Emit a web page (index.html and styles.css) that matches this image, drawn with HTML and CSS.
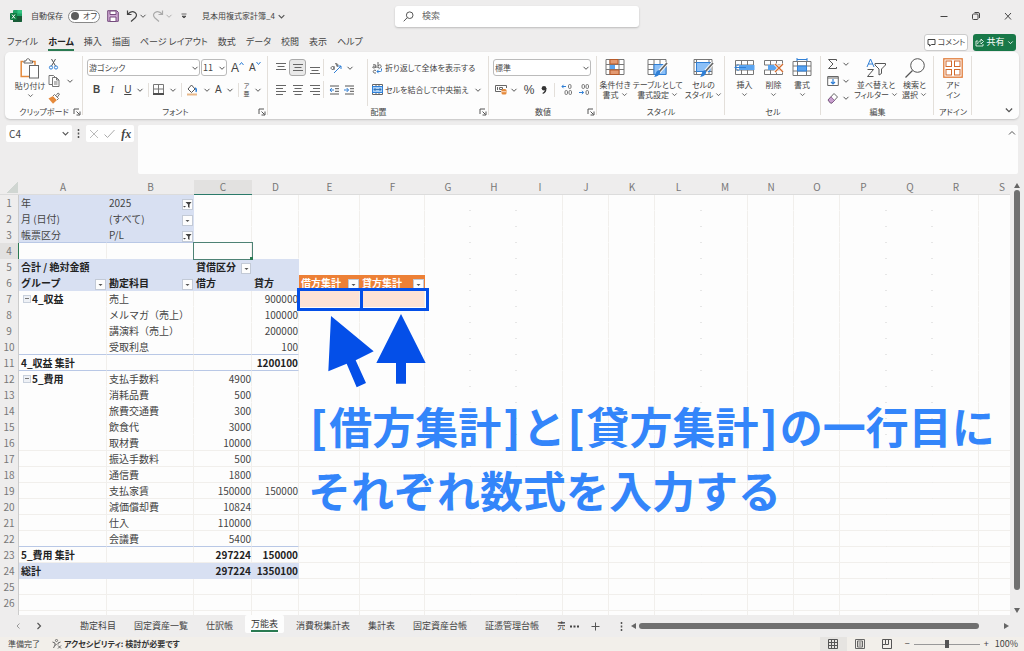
FILE: index.html
```html
<!DOCTYPE html>
<html lang="ja">
<head>
<meta charset="utf-8">
<title>見本用複式家計簿_4</title>
<link rel="stylesheet" href="styles.css">
</head>
<body>
<svg class="defs" aria-hidden="true">
  <symbol id="chev" viewBox="0 0 8 8"><path d="M1.5 2.8 4 5.3 6.5 2.8" fill="none" stroke="#555" stroke-width="1"/></symbol>
  <symbol id="launch" viewBox="0 0 8 8"><path d="M1 6V1h5M3.5 3.500 6.500 6.500M7 3.500V7H3.500" fill="none" stroke="#555" stroke-width="1"/></symbol>
  <symbol id="al" viewBox="0 0 12 12"><path d="M1 1.500h10M1 4.500h7M1 7.500h10M1 10.500h7" stroke="#666"/></symbol>
  <symbol id="ac" viewBox="0 0 12 12"><path d="M1 1.500h10M2.500 4.500h7M1 7.500h10M2.500 10.500h7" stroke="#666"/></symbol>
  <symbol id="ar" viewBox="0 0 12 12"><path d="M1 1.500h10M4 4.500h7M1 7.500h10M4 10.500h7" stroke="#666"/></symbol>
</svg>
<div class="app">
  <header class="titlebar">
    <div class="quick">
      <svg class="xl" width="12" height="12" viewBox="0 0 12 12"><rect x="3" y="0" width="9" height="12" rx="1" fill="#21a366"/><path d="M3 6h9v5a1 1 0 0 1-1 1H3z" fill="#185c37"/><path d="M7.500 0H11a1 1 0 0 1 1 1v2.500H7.500z" fill="#33c481"/><rect y="3" width="7" height="7" rx="1" fill="#107c41"/><path d="m2 4.500 3 4M5 4.500l-3 4" stroke="#fff"/></svg>
      <span class="autosave">自動保存</span>
      <button class="toggle" aria-label="自動保存 オフ"><i></i>オフ</button>
      <button class="q-save" aria-label="保存"><svg width="12" height="12" viewBox="0 0 12 12"><path d="M.7.7h9L11.300 2.300v9H.700z" fill="#cfa9d4" stroke="#744a7c"/><path d="M3 1h6v3.500H3zM3 7h6v4.500H3z" fill="#fff" stroke="#744a7c"/></svg></button>
      <button class="q-undo" aria-label="元に戻す"><svg width="12" height="12" viewBox="0 0 12 12"><path d="M1.500.500v4h4M1.500 4.500C4 1.500 7 1 9 2.500s2 3.500 0 5.500l-4 3.500" fill="none" stroke="#444" stroke-width="1.200"/></svg><svg width="8" height="8"><use href="#chev"/></svg></button>
      <button class="q-redo" aria-label="やり直し"><svg width="12" height="12" viewBox="0 0 12 12"><path d="M10.500.500v4h-4M10.500 4.500C8 1.500 5 1 3 2.500S1 6 3 8l4 3.500" fill="none" stroke="#aaa" stroke-width="1.200"/></svg><svg width="8" height="8" opacity=".4"><use href="#chev"/></svg></button>
      <button class="q-more" aria-label="カスタマイズ"><svg width="8" height="8" viewBox="0 0 8 8"><path d="M1.500 2h5M2 4.200 4 6l2-1.800z" fill="#444" stroke="#444" stroke-width=".8"/></svg></button>
      <button class="doc">見本用複式家計簿_4<svg width="9" height="9"><use href="#chev"/></svg></button>
    </div>
    <label class="search"><svg width="11" height="11" viewBox="0 0 11 11"><circle cx="6.700" cy="4.200" r="3.300" fill="none" stroke="#555"/><path d="M4.300 6.600.700 10.300" stroke="#555"/></svg><input type="search" placeholder="検索" aria-label="検索"></label>
    <div class="window">
      <button aria-label="最小化"><svg width="10" height="10" viewBox="0 0 10 10"><path d="M1.500 5.500h7" stroke="#444"/></svg></button>
      <button aria-label="元に戻す (縮小)"><svg width="10" height="10" viewBox="0 0 10 10"><rect x="1.500" y="3" width="5.500" height="5.500" rx="1" fill="none" stroke="#444"/><path d="M3.500 1.500H7A1.500 1.500 0 0 1 8.500 3v4" fill="none" stroke="#444"/></svg></button>
      <button aria-label="閉じる"><svg width="10" height="10" viewBox="0 0 10 10"><path d="m2 2 6 6.500M8 2 2 8.500" stroke="#444"/></svg></button>
    </div>
  </header>

  <nav class="tabs">
    <a href="#">ファイル</a><a href="#" class="on">ホーム</a><a href="#">挿入</a><a href="#">描画</a><a href="#">ページ レイアウト</a><a href="#">数式</a><a href="#">データ</a><a href="#">校閲</a><a href="#">表示</a><a href="#">ヘルプ</a>
    <button class="comment"><svg width="9" height="9" viewBox="0 0 9 9"><path d="M1 1.500h7v5H4.500L2.500 8V6.500H1z" fill="none" stroke="#444"/></svg>コメント</button>
    <button class="share"><svg width="9" height="9" viewBox="0 0 9 9"><path d="M3 3H1v5h7V6M2.500 6C3 4 4 3 6 3V1l2.500 2.500L6 6V4.500" fill="none" stroke="#fff" stroke-width=".8"/></svg>共有<svg width="7" height="7" viewBox="0 0 8 8"><path d="M1.500 2.800 4 5.300 6.500 2.800" fill="none" stroke="#fff"/></svg></button>
  </nav>

  <section class="ribbon">
    <div class="group g-clip">
      <div class="body">
        <button class="big paste"><svg width="20" height="21" viewBox="0 0 20 21"><path d="M3.500 3.500H1.200v15h8M12 3.500h3V7" fill="none" stroke="#e58a3c" stroke-width="1.500"/><path d="M4 5V3h2c0-3 4-3 4 0h2.500v2z" fill="#fff" stroke="#666"/><rect x="9.500" y="7.500" width="9" height="12.500" fill="#fff" stroke="#666"/></svg><span>貼り付け</span><svg width="7" height="7"><use href="#chev"/></svg></button>
        <div class="stack">
          <button aria-label="切り取り"><svg width="11" height="12" viewBox="0 0 11 12"><path d="m3.500 1 4 7M7.500 1l-4 7" stroke="#555"/><circle cx="3" cy="9.500" r="1.600" fill="none" stroke="#2f7fd6"/><circle cx="8" cy="9.500" r="1.600" fill="none" stroke="#2f7fd6"/></svg></button>
          <button aria-label="コピー"><svg width="12" height="12" viewBox="0 0 12 12"><path d="M4 9.500H1v-9h4.500L7 2M4.500 2.500h4L11 5v6.500H4.500zM8.500 2.500V5H11M6 7h3.500M6 9h3.500" fill="none" stroke="#666" stroke-width=".9"/></svg><svg width="8" height="8"><use href="#chev"/></svg></button>
          <button aria-label="書式のコピー"><svg width="12" height="12" viewBox="0 0 12 12"><path d="M.500 6.500 5 4l4 4-4 3.800z" fill="#e58a3c"/><path d="m5 4 1.500-1.500 4 4L9 8M8 3.500l2-2.500 1.500 1L9.500 5" fill="#fff" stroke="#666" stroke-width=".9"/></svg></button>
        </div>
      </div>
      <footer><span>クリップボード</span><svg width="8" height="8"><use href="#launch"/></svg></footer>
    </div>

    <div class="group g-font">
      <div class="body rows">
        <div class="row">
          <span class="sel w-font"><select aria-label="フォント"><option>游ゴシック</option></select><svg width="8" height="8"><use href="#chev"/></svg></span>
          <span class="sel w-size"><select aria-label="フォント サイズ"><option>11</option></select><svg width="8" height="8"><use href="#chev"/></svg></span>
          <button class="grow" aria-label="拡大">A<svg width="5" height="5" viewBox="0 0 5 5"><path d="m.500 4 2-2.500 2 2.500" fill="none" stroke="#2f7fd6"/></svg></button>
          <button class="grow small" aria-label="縮小">A<svg width="5" height="5" viewBox="0 0 5 5"><path d="m.500 1 2 2.500L4.500 1" fill="none" stroke="#2f7fd6"/></svg></button>
        </div>
        <div class="row fmt">
          <button class="b">B</button><button class="i">I</button><button class="u">U</button><svg width="8" height="8"><use href="#chev"/></svg><hr>
          <button aria-label="罫線"><svg width="11" height="11" viewBox="0 0 11 11"><path d="M.500 9V.500h10V9M.500 5h10M5.500.500V9" fill="none" stroke="#777"/><path d="M0 10h11" stroke="#222" stroke-width="1.600"/></svg></button><svg width="8" height="8"><use href="#chev"/></svg><hr>
          <button aria-label="塗りつぶし"><svg width="12" height="12" viewBox="0 0 12 12"><path d="M5.500 1 2 5l3.500 3.500L9 5z" fill="#fff" stroke="#555"/><path d="M9 4c2 1 1.500 2.500 1 4" fill="none" stroke="#2f7fd6" stroke-width="1.400"/><path d="M1 10.500h10" stroke="#e8b98a" stroke-width="2"/></svg></button><svg width="8" height="8"><use href="#chev"/></svg>
          <button class="a">A</button><svg width="8" height="8"><use href="#chev"/></svg><hr>
          <button class="ruby" aria-label="ふりがな"><span>ア</span><span>亜</span></button><svg width="8" height="8"><use href="#chev"/></svg>
        </div>
      </div>
      <footer><span>フォント</span><svg width="8" height="8"><use href="#launch"/></svg></footer>
    </div>

    <div class="group g-align">
      <div class="body cols">
        <div class="aligns">
          <button aria-label="上揃え"><svg width="12" height="12" viewBox="0 0 12 12"><path d="M1 1.500h10M2.500 4.500h7M1 7.500h10" stroke="#666"/></svg></button>
          <button class="on" aria-label="上下中央揃え"><svg width="12" height="12" viewBox="0 0 12 12"><path d="M1 2.500h10M2.500 5.500h7M1 8.500h10" stroke="#666"/></svg></button>
          <button aria-label="下揃え"><svg width="12" height="12" viewBox="0 0 12 12"><path d="M1 5.500h10M2.500 8.500h7M1 11.500h10" stroke="#666"/></svg></button>
          <button class="orient" aria-label="方向"><svg width="12" height="12" viewBox="0 0 12 12"><path d="M2.500 4.500a1.500 1.500 0 1 0 .1 0M4 4v4M5.500 1l2 4M7 4c2-1 0-3-1-2" fill="none" stroke="#555" stroke-width=".9"/><path d="m4 11 7-7M11 7V4H8" fill="none" stroke="#2f7fd6"/></svg><svg width="8" height="8"><use href="#chev"/></svg></button>
          <button aria-label="左揃え"><svg width="12" height="12"><use href="#al"/></svg></button>
          <button aria-label="中央揃え"><svg width="12" height="12"><use href="#ac"/></svg></button>
          <button aria-label="右揃え"><svg width="12" height="12"><use href="#ar"/></svg></button>
          <button class="orient" aria-label="インデント"><svg width="11" height="10" viewBox="0 0 11 10"><path d="M1 1h9M6 3.700h4M6 6.300h4M1 9h9" stroke="#555"/><path d="M5 5H1m1.800-2L1 5l1.800 2" fill="none" stroke="#2f7fd6"/></svg><svg width="11" height="10" viewBox="0 0 11 10"><path d="M1 1h9M6 3.700h4M6 6.300h4M1 9h9" stroke="#555"/><path d="M0 5h4.500M2.700 3l1.800 2-1.800 2" fill="none" stroke="#2f7fd6"/></svg></button>
        </div>
        <div class="wraps">
          <button><svg width="11" height="12" viewBox="0 0 11 12"><path d="M1 3c2-1 3 0 3 1v2M4 4C0 4 0 6 2 6l2-1M6 0v6M6 4c1-2 4-1 3 1S6 6 6 5M4 8.500C1 7 0 11 3 11h1" fill="none" stroke="#555" stroke-width=".9"/><path d="M9.500 6.500v2q0 1-1 1H5m1.500-1.700L5 9.500l1.500 1.700" fill="none" stroke="#2f7fd6"/></svg>折り返して全体を表示する</button>
          <button><svg width="11" height="11" viewBox="0 0 11 11"><path d="M.500.500h10v10H.500zM4 .500V3M7 .500V3M4 8v2.500M7 8v2.500" fill="#fff" stroke="#666"/><rect x=".5" y="2.500" width="10" height="6" fill="#a9d0f7" stroke="#2f7fd6"/><path d="M2 5.500h7M3.500 4 2 5.500 3.500 7M7.500 4 9 5.500 7.500 7" fill="none" stroke="#1c5fa8" stroke-width=".8"/></svg>セルを結合して中央揃え<svg class="end" width="8" height="8"><use href="#chev"/></svg></button>
        </div>
      </div>
      <footer><span>配置</span><svg width="8" height="8"><use href="#launch"/></svg></footer>
    </div>

    <div class="group g-num">
      <div class="body rows">
        <div class="row"><span class="sel w-num"><select aria-label="表示形式"><option>標準</option></select><svg width="8" height="8"><use href="#chev"/></svg></span></div>
        <div class="row nums">
          <button class="cur" aria-label="通貨"><svg width="12" height="11" viewBox="0 0 12 11"><path d="M6 7.500H.500v-6h11V4" fill="none" stroke="#666"/><path d="M2.500 3v3M4.500 3.500h3v2h-3z" fill="none" stroke="#666"/><rect x="6.500" y="5" width="5" height="5.500" rx="1.500" fill="#e58a3c"/><path d="M7 7.700h4" stroke="#fff" stroke-width=".7"/></svg><svg width="8" height="8"><use href="#chev"/></svg></button>
          <button class="pct">%</button>
          <button aria-label="桁区切り"><svg width="8" height="10" viewBox="0 0 8 10"><circle cx="4" cy="3.300" r="2.300" fill="#333"/><path d="M5.700 3c.5 3-1 4.500-3 5.500" fill="none" stroke="#333" stroke-width="1.300"/></svg></button><hr>
          <button class="dec" aria-label="小数点以下の桁数を増やす"><svg width="11" height="11" viewBox="0 0 11 11"><path d="M5 2.500H1m1.500-1.700L1 2.500l1.500 1.700" fill="none" stroke="#2f7fd6"/><g fill="none" stroke="#666" stroke-width=".9"><rect x="7.500" y=".5" width="2.500" height="4" rx="1.200"/><rect x="4" y="6.500" width="2.500" height="4" rx="1.200"/><rect x="8" y="6.500" width="2.500" height="4" rx="1.200"/></g></svg></button>
          <button class="dec" aria-label="小数点以下の桁数を減らす"><svg width="11" height="11" viewBox="0 0 11 11"><path d="M1 8.500h4.500M4 6.800l1.500 1.700L4 10.200" fill="none" stroke="#2f7fd6"/><g fill="none" stroke="#666" stroke-width=".9"><rect x="4" y=".5" width="2.500" height="4" rx="1.200"/><rect x="8" y=".5" width="2.500" height="4" rx="1.200"/><rect x="8" y="6.500" width="2.500" height="4" rx="1.200"/></g></svg></button>
        </div>
      </div>
      <footer><span>数値</span><svg width="8" height="8"><use href="#launch"/></svg></footer>
    </div>

    <div class="group g-style">
      <div class="body bigs">
        <button class="big"><svg width="20" height="20" viewBox="0 0 20 20"><path d="M1 1.500h18v15H1zM1 6.500h18M1 11.500h18M5 1.500v15M14 1.500v15" fill="#fff" stroke="#777"/><path d="M5 1.500h8v4.500H5zM5 12h9v4.500H5z" fill="#e39a72" stroke="#b85b2a"/><path d="M5 7h5v4H5z" fill="#5aa4f0"/></svg><span>条件付き<br>書式<svg width="7" height="7"><use href="#chev"/></svg></span></button>
        <button class="big"><svg width="21" height="20" viewBox="0 0 21 20"><path d="M1 1.500h18v15H1zM1 6.500h18M1 11.500h18M7 1.500v15M13 1.500v15" fill="#fff" stroke="#777"/><path d="M7 6.500h12v10H7z" fill="#8cc0f7" stroke="#2f7fd6"/><path d="m20 5-8 9" stroke="#fff" stroke-width="3.500"/><path d="m20 5-8 9" stroke="#666" stroke-width="1.800"/><path d="M12 12c2 1 2 6-5 7 2-2 1-6 5-7z" fill="#2f7fd6"/></svg><span>テーブルとして<br>書式設定<svg width="7" height="7"><use href="#chev"/></svg></span></button>
        <button class="big"><svg width="21" height="20" viewBox="0 0 21 20"><path d="M1 1.500h18v15H1zM1 4.500h18M1 13.500h18M3.500 1.500v15M16 1.500v15" fill="#fff" stroke="#777"/><path d="M3.500 4.500H17v9H3.500z" fill="#8cc0f7" stroke="#2f7fd6"/><path d="m20 5-8 9" stroke="#fff" stroke-width="3.500"/><path d="m20 5-8 9" stroke="#666" stroke-width="1.800"/><path d="M12 12c2 1 2 6-5 7 2-2 1-6 5-7z" fill="#2f7fd6"/></svg><span>セルの<br>スタイル<svg width="7" height="7"><use href="#chev"/></svg></span></button>
      </div>
      <footer><span>スタイル</span></footer>
    </div>

    <div class="group g-cell">
      <div class="body bigs">
        <button class="big"><svg width="21" height="20" viewBox="0 0 21 20"><path d="M1.500 2.500h18v14h-18zM7.500 2.500v14M13.500 2.500v14M1.500 7h18M1.500 12h18" fill="#fff" stroke="#777"/><path d="M5 7h15.500v5H5z" fill="#5aa4f0"/><path d="M12 9.500H1M4.500 6 1 9.500 4.500 13" fill="none" stroke="#2f7fd6"/></svg><span>挿入</span><svg width="7" height="7"><use href="#chev"/></svg></button>
        <button class="big"><svg width="21" height="20" viewBox="0 0 21 20"><path d="M1.500 2.500h18v4.500h-18zM1.500 12h18v4.500h-18zM7.500 2.500V7M13.500 2.500V7M7.500 12v4.500M13.500 12v4.500" fill="#fff" stroke="#777"/><path d="M5 7h7l3 2.500-3 2.500H5z" fill="#5aa4f0"/><path d="m12 6 8 8M20 6l-8 8" stroke="#fff" stroke-width="3"/><path d="m12 6 8 8M20 6l-8 8" stroke="#d2692c" stroke-width="1.300"/></svg><span>削除</span><svg width="7" height="7"><use href="#chev"/></svg></button>
        <button class="big"><svg width="20" height="20" viewBox="0 0 20 20"><path d="M1 3.500h18v14H1zM5.500 3.500v14M14.500 3.500v14M1 8h18M1 13h18" fill="#fff" stroke="#777"/><path d="M5.500 8h9v5h-9z" fill="#5aa4f0" stroke="#2f7fd6"/><path d="M5 0v3M15 0v3M5 1.500h10" stroke="#2f7fd6"/></svg><span>書式</span><svg width="7" height="7"><use href="#chev"/></svg></button>
      </div>
      <footer><span>セル</span></footer>
    </div>

    <div class="group g-edit">
      <div class="body">
        <div class="stack">
          <button aria-label="オート SUM"><svg width="12" height="12" viewBox="0 0 12 12"><path d="M9.500 3V1.500h-8L6 6l-4.500 4.500h8V9" fill="none" stroke="#555"/></svg><svg width="8" height="8"><use href="#chev"/></svg></button>
          <button aria-label="フィル"><svg width="12" height="12" viewBox="0 0 12 12"><path d="M.700 1.500h10.600v9H.700zM.700 3h10.600" fill="#fff" stroke="#666"/><path d="M6 4v5M4 7l2 2 2-2" fill="none" stroke="#2f7fd6" stroke-width="1.200"/></svg><svg width="8" height="8"><use href="#chev"/></svg></button>
          <button aria-label="クリア"><svg width="12" height="12" viewBox="0 0 12 12"><path d="m1 8 6-6.500L10.500 5l-5.500 6H3.500z" fill="#fff" stroke="#666"/><path d="m1 8 3-3.200 3.500 3.700L5 11H3.500z" fill="#c9a0cf" stroke="#744a7c" stroke-width=".7"/></svg><svg width="8" height="8"><use href="#chev"/></svg></button>
        </div>
        <button class="big"><svg width="20" height="20" viewBox="0 0 20 20"><path d="m1 9 3.500-8L8 9M2.300 6h4.400" fill="none" stroke="#2f7fd6"/><path d="M1.500 11.500h6l-6 7h6" fill="none" stroke="#555"/><path d="M9 5.500h10.500v1.500L15.500 11v4.500L13 17v-6L9 7z" fill="#fff" stroke="#555"/></svg><span>並べ替えと<br>フィルター<svg width="7" height="7"><use href="#chev"/></svg></span></button>
        <button class="big"><svg width="20" height="20" viewBox="0 0 20 20"><circle cx="12.500" cy="7.500" r="6.800" fill="none" stroke="#555"/><path d="M7.500 12.500.500 19.500" stroke="#555" stroke-width="1.200"/></svg><span>検索と<br>選択<svg width="7" height="7"><use href="#chev"/></svg></span></button>
      </div>
      <footer><span>編集</span></footer>
    </div>

    <div class="group g-add">
      <div class="body bigs">
        <button class="big"><svg width="20" height="20" viewBox="0 0 20 20"><rect x=".8" y=".8" width="18.400" height="18.400" fill="#fff" stroke="#e07b39" stroke-width="1.300"/><g fill="#fff" stroke="#d2692c"><rect x="3" y="3" width="5.500" height="5.500"/><rect x="11.500" y="3" width="5.500" height="5.500"/><rect x="3" y="11.500" width="5.500" height="5.500"/><rect x="11.500" y="11.500" width="5.500" height="5.500"/></g></svg><span>アド<br>イン</span></button>
      </div>
      <footer><span>アドイン</span></footer>
    </div>
    <button class="collapse" aria-label="リボンを折りたたむ"><svg width="10" height="10"><use href="#chev"/></svg></button>
  </section>

  <section class="formula">
    <label class="namebox"><input value="C4" aria-label="名前ボックス"><svg width="9" height="9"><use href="#chev"/></svg></label>
    <svg class="dots" width="3" height="9" viewBox="0 0 3 9"><path d="M1.500 0v2M1.500 3.500v2M1.500 7v2" stroke="#555" stroke-width="1.500"/></svg>
    <div class="fx">
      <button aria-label="キャンセル"><svg width="10" height="10" viewBox="0 0 10 10"><path d="m1 1 8 8M9 1 1 9" stroke="#bbb"/></svg></button>
      <button aria-label="入力"><svg width="11" height="10" viewBox="0 0 11 10"><path d="m.500 5.500 3 3L10.500 1" fill="none" stroke="#aaa"/></svg></button>
      <button class="fxb">fx</button>
    </div>
    <div class="fbar"><textarea aria-label="数式バー"></textarea><svg width="8" height="8" viewBox="0 0 8 8"><path d="M1 5.500 4 2.500l3 3" fill="none" stroke="#555"/></svg></div>
  </section>

  <main class="work">
    <div class="sheet">
      <table id="grid"></table>
      <div class="mark mark-e"></div>
      <div class="mark mark-f"></div>
      <svg class="arrows" width="240" height="130" viewBox="0 0 720 390" aria-hidden="true"><g fill="#044fe8"><path d="m123 153 128 106-54 27 31 68-28 13-30-71-55 23z"/><path d="m333 147 74 147h-59v62h-30v-62h-59z"/></g></svg>
      <p class="note"><b>[</b>借方集計<b>]</b>と<b>[</b>貸方集計<b>]</b>の一行目に<br>それぞれ数式を入力する</p>
    </div>
    <div class="vscroll"><svg width="6" height="5" viewBox="0 0 6 5"><path d="M3 0 6 5H0z" fill="#666"/></svg><i></i><svg width="6" height="5" viewBox="0 0 6 5"><path d="M3 5 6 0H0z" fill="#666"/></svg></div>
  </main>

  <nav class="sheets">
    <div class="arrowsnav"><button aria-label="前へ"><svg width="6" height="8" viewBox="0 0 6 8"><path d="M4.500 1.500 2 4l2.500 2.500" fill="none" stroke="#999"/></svg></button><button aria-label="次へ"><svg width="6" height="8" viewBox="0 0 6 8"><path d="M1.500 1 4.500 4l-3 3" fill="none" stroke="#555" stroke-width="1.200"/></svg></button></div>
    <a href="#">勘定科目</a><a href="#">固定資産一覧</a><a href="#">仕訳帳</a><a href="#" class="on"><span>万能表</span></a><a href="#">消費税集計表</a><a href="#">集計表</a><a href="#">固定資産台帳</a><a href="#">証憑管理台帳</a><a href="#" class="cut">売</a>
    <button class="more" aria-label="その他のシート"><svg width="9" height="3" viewBox="0 0 9 3"><path d="M0 1.500h2M3.500 1.500h2M7 1.500h2" stroke="#444" stroke-width="1.800"/></svg></button>
    <button class="plus" aria-label="新しいシート"><svg width="9" height="9" viewBox="0 0 9 9"><path d="M4.500.500v8M.500 4.500h8" stroke="#555"/></svg></button>
    <svg class="vdots" width="3" height="9" viewBox="0 0 3 9"><path d="M1.500 0v2M1.500 3.500v2M1.500 7v2" stroke="#555" stroke-width="1.500"/></svg>
    <div class="hscroll"><svg width="5" height="6" viewBox="0 0 5 6"><path d="M0 3 5 0v6z" fill="#666"/></svg><i></i><svg width="5" height="6" viewBox="0 0 5 6"><path d="M5 3 0 0v6z" fill="#666"/></svg></div>
  </nav>

  <footer class="status">
    <span>準備完了</span>
    <button class="acc"><svg width="10" height="10" viewBox="0 0 10 10"><circle cx="4.500" cy="1.500" r="1.100" fill="none" stroke="#555" stroke-width=".8"/><path d="m.500 3 2.500 1v2L1.500 9M8.500 3 6 4v1.500M3.500 6.500 4.500 5M6 6.500l3 3M9 6.500l-3 3" fill="none" stroke="#555" stroke-width=".9"/></svg>アクセシビリティ: 検討が必要です</button>
    <div class="views">
      <button class="on" aria-label="標準"><svg width="10" height="10" viewBox="0 0 10 10"><path d="M.500.500h9v9h-9zM3.500.500v9M6.500.500v9M.500 3.500h9M.500 6.500h9" fill="none" stroke="#555"/></svg></button>
      <button aria-label="ページ レイアウト"><svg width="10" height="10" viewBox="0 0 10 10"><path d="M.500.500h9v9h-9zM2.500 2h5v6h-5zM3.500 4h3M3.500 6h3" fill="none" stroke="#666"/></svg></button>
      <button aria-label="改ページ プレビュー"><svg width="10" height="10" viewBox="0 0 10 10"><path d="M.500.500h9v9h-9zM3.500.500v5h-3M3.500 5.500h3v-5" fill="none" stroke="#555"/></svg></button>
    </div>
    <div class="zoom"><button aria-label="縮小">−</button><input type="range" min="0" max="100" value="50" aria-label="ズーム"><button aria-label="拡大">+</button><span>100%</span></div>
  </footer>
</div>
<script src="sheet.js"></script>
</body>
</html>
```

FILE: styles.css
```css
* { box-sizing: border-box; }
body {
  margin: 0;
  font: 9px/12px "Noto Sans CJK JP", "Noto Sans", sans-serif;
  font-feature-settings: "palt";
  color: #444;
  background: #eeeded;
}
button, input, select, textarea {
  font: inherit;
  font-feature-settings: inherit;
  color: inherit;
  margin: 0;
  padding: 0;
  border: 0;
  background: none;
  outline: 0;
}
button { display: flex; align-items: center; justify-content: center; white-space: nowrap; }
a { color: inherit; text-decoration: none; white-space: nowrap; }
svg { flex: none; }
hr { width: 1px; height: 14px; margin: 0; border: 0; background: #e3dfda; }
.defs { position: absolute; width: 0; height: 0; }
.app { display: flex; flex-direction: column; height: 100vh; overflow: hidden; }

/* title bar */
.titlebar { display: grid; grid-template-columns: 395px minmax(160px, 244px) 1fr; align-items: center; height: 32px; flex: none; }
.quick { display: flex; align-items: center; font-size: 8px; padding-left: 10px; }
.autosave { margin: 0 5px 0 9px; }
.toggle { gap: 4px; width: 32px; height: 13px; border: 1px solid #888; border-radius: 7px; background: #fff; margin-right: 7px; }
.toggle i { width: 8px; height: 8px; border-radius: 50%; background: #5c5c5c; }
.q-undo { margin-left: 7px; gap: 1px; }
.q-redo { margin-left: 5px; gap: 1px; }
.q-more { margin: 0 14px 0 7px; }
.doc { gap: 2px; }
.search { display: flex; align-items: center; gap: 8px; height: 21px; padding: 0 8px; background: #fff; border-radius: 3px; box-shadow: 0 1px 2px #bbb; }
.search input { flex: 1; min-width: 0; }
.search input::placeholder { color: #666; opacity: 1; }
.window { display: flex; justify-content: flex-end; gap: 22px; padding-right: 11px; }

/* ribbon tabs */
.tabs { display: flex; align-items: center; gap: 10px; height: 20px; flex: none; padding: 0 8px 0 7px; }
.tabs a { padding-bottom: 1px; border-bottom: 2px solid transparent; line-height: 13px; margin-top: 2px; }
.tabs .on { font-weight: 700; border-color: #2a7a52; color: #222; }
.comment, .share { height: 17px; gap: 2px; border-radius: 3px; font-size: 8px; }
.comment { margin-left: auto; width: 44px; background: #fff; border: 1px solid #ccc; }
.share { margin-left: -5px; width: 43px; background: #187848; color: #fff; font-size: 9px; }

/* ribbon */
.ribbon { display: flex; flex: none; height: 67px; margin: 0 5px; background: #fdfdfd; border-radius: 5px; box-shadow: 0 1px 2px #c4c4c4; font-size: 8px; }
.group { display: flex; flex-direction: column; padding-top: 6px; position: relative; }
.group::after { content: ""; position: absolute; right: 0; top: 4px; bottom: 4px; width: 1px; background: #e3dfda; }
.group .body { display: flex; height: 48px; }
.group footer { position: relative; display: flex; justify-content: center; line-height: 12px; }
.group footer svg { position: absolute; right: 2px; top: 2px; }
.g-clip { width: 78px; }
.g-font { width: 185px; }
.g-align { width: 221px; }
.g-num { width: 108px; }
.g-style { width: 128px; }
.g-cell { width: 96px; }
.g-edit { width: 113px; }
.g-add { width: 38px; }
.collapse { margin: auto 5px 4px auto; }

.big { flex-direction: column; justify-content: flex-start; line-height: 10px; }
.big span { margin-top: 2px; }
.big span svg { margin-left: 2px; }
.big > svg + span + svg { margin-top: 1px; }
.bigs { justify-content: center; gap: 8px; }
.g-style .bigs { gap: 2px; }
.paste { width: 40px; margin-left: 5px; }
.stack { display: flex; flex-direction: column; gap: 5px; }
.stack button { gap: 6px; justify-content: flex-start; }
.g-clip .stack { margin-left: -2px; }
.g-edit .body { gap: 4px; padding-left: 6px; }
.g-edit .stack button { gap: 3px; }

.rows { flex-direction: column; gap: 5px; padding-top: 1px; }
.row { display: flex; align-items: center; height: 17px; }
.sel { position: relative; display: flex; height: 17px; border: 1px solid #bbb; border-radius: 3px; background: #fff; }
.sel select { appearance: none; flex: 1; min-width: 0; padding: 0 1px; }
.sel svg { position: absolute; right: 0; top: 4px; pointer-events: none; }
.w-font { width: 113px; margin-left: 4px; }
.w-size { width: 26px; margin-left: 1px; font-size: 9px; }
.w-num { width: 98px; margin-left: 4px; }
.grow { align-items: flex-start; font: 12px/14px "Liberation Sans", sans-serif; margin-left: 4px; }
.grow.small { font-size: 10px; margin-left: 5px; }
.fmt { padding: 0 6px 0 10px; justify-content: space-between; font: 10px/12px "Liberation Sans", sans-serif; }
.fmt .b { font-weight: 700; margin-right: 6px; }
.fmt .i { font-family: "Liberation Serif", serif; font-style: italic; margin-right: 6px; }
.fmt .u { text-decoration: underline; }
.ruby { flex-direction: column; font: 6px/8px "Noto Sans CJK JP", sans-serif; }
.nums { padding: 0 8px 0 6px; justify-content: space-between; }
.cur { gap: 3px; }
.pct { font: 12px/14px "Liberation Sans", sans-serif; }

.cols { padding: 1px 0 0 4px; }
.aligns { display: grid; grid-template-columns: 17px 17px 17px 37px; grid-auto-rows: 17px; row-gap: 5px; padding-right: 2px; }
.aligns .on { border: 1px solid #aaa; border-radius: 3px; background: #e9e9e9; }
.orient { gap: 4px; border-left: 1px solid #e3dfda; }
.wraps { flex: 1; display: flex; flex-direction: column; gap: 5px; padding: 0 7px 0 4px; margin-left: 5px; border-left: 1px solid #e3dfda; }
.wraps button { height: 17px; gap: 2px; justify-content: flex-start; }
.wraps .end { margin-left: auto; }

/* formula bar */
.formula { display: flex; align-items: flex-start; flex: none; height: 61px; padding: 6px 6px 0; }
.namebox { display: flex; align-items: center; width: 66px; height: 17px; padding: 0 2px 0 3px; background: #fff; border-radius: 2px; }
.namebox input { flex: 1; min-width: 0; font-size: 10px; }
.dots { margin: 4px 6px 0 5px; }
.fx { display: flex; align-items: center; justify-content: space-around; width: 48px; height: 17px; background: #fff; border-radius: 2px; }
.fxb { font: italic 700 12px/14px "Liberation Serif", serif; }
.fbar { position: relative; flex: 1; height: 49px; margin-left: 4px; background: #fdfdfd; border-radius: 2px; }
.fbar textarea { display: block; width: 100%; height: 100%; resize: none; }
.fbar svg { position: absolute; right: 2px; top: 4px; }

/* worksheet */
.work { display: flex; flex: 1; min-height: 0; }
.sheet { position: relative; flex: 1; min-width: 0; overflow: hidden; background: #fdfdfd; }
#grid { width: 1025px; table-layout: fixed; border-collapse: separate; border-spacing: 0; font-size: 10px; font-feature-settings: normal; line-height: 15px; }
#grid th, #grid td { height: 16px; padding: 0; white-space: nowrap; font-weight: 400; text-align: left; vertical-align: top; }
#grid thead th { height: 15px; background: #eeeded; color: #777; text-align: center; line-height: 14px; border-bottom: 1px solid #dcdcdc; }
#grid thead .sel-col { background: #e2e1e0; border-bottom-color: #2a7a6a; }
#grid thead .corner::after { content: ""; display: block; width: 11px; height: 11px; margin: 2px 0 0 7px; background: linear-gradient(135deg, transparent 50%, #d0d6d2 50%); }
#grid tbody th { background: #eeeded; color: #777; text-align: center; border-right: 1px solid #ccc; }
#grid tbody .sel-row { background: #e2e1e0; border-right-color: #2a7a52; }
#grid td { border-bottom: 1px solid transparent; border-right: 1px solid #f1efec; }
#grid td.dot { border-right-color: transparent; background: linear-gradient(#e6e6e6, #e6e6e6) right bottom / 2px 1px no-repeat border-box; }
#grid .lined td { border-bottom-color: #f1efec; }
#grid td.blue { background: #d8e0f2; border-color: #d8e0f2; color: #444; }
#grid .strong td { font-weight: 700; color: #222; }
#grid .cell { display: flex; align-items: center; height: 15px; padding: 0 0 0 2px; }
#grid .num { justify-content: flex-end; }
#grid .cell button { width: 11px; height: 11px; margin: 4px 0 0 auto; background: #fdfdfd; border: 1px solid #c3cad6; }
#grid .near button { margin-left: 5px; }
#grid .strongcell { font-weight: 700; color: #222; }
#grid .fold { width: 8px; height: 8px; margin: 0 1px 0 2px; border: 1px solid #c8d0dc; background: linear-gradient(#777, #777) center / 4px 1px no-repeat #eef1f6; }
#grid td.under { border-bottom-color: #b9c8e6; }
#grid td.orange { background: #ed8036; border-color: #ed8036; color: #fff; font-weight: 700; }
#grid td.peach { background: #fde3d6; }
#grid td.active { outline: 1px solid #4d8275; outline-offset: 0; position: relative; }
#grid td.active::after { content: ""; position: absolute; right: -2px; bottom: -2px; width: 3px; height: 3px; background: #2a7a52; }

/* callout drawn over the sheet */
.mark { position: absolute; top: 108px; height: 23px; border: 3px solid #044fe8; }
.mark-e { left: 297px; width: 66px; }
.mark-f { left: 360px; width: 69px; }
.arrows { position: absolute; left: 290px; top: 85px; }
.note { position: absolute; left: 308px; top: 213px; margin: 0; font-size: 43px; line-height: 64px; font-weight: 700; font-feature-settings: normal; color: #3385fa; white-space: nowrap; }
.note b { padding: 0 2px; }

.vscroll { display: flex; flex-direction: column; align-items: center; width: 14px; padding: 3px 0 2px; background: #eeeded; }
.vscroll i { flex: 1; width: 6px; margin: 2px 0 18px; border-radius: 3px; background: #707070; }

/* sheet tabs */
.sheets { display: flex; align-items: center; flex: none; height: 22px; }
.arrowsnav { display: flex; gap: 15px; width: 71px; padding-left: 15px; }
.sheets a { padding: 0 9px; font-feature-settings: normal; }
.sheets .on { align-self: flex-start; height: 18px; background: #fdfdfd; border-radius: 2px; margin: 0 3px; padding: 1px 6px; color: #333; }
.sheets .on span { display: block; height: 16px; line-height: 15px; border-bottom: 2px solid #2a7a52; }
.sheets .cut { width: 17px; overflow: hidden; padding: 0 0 0 9px; }
.more { margin-left: 5px; }
.plus { margin: 0 20px 0 12px; }
.hscroll { display: flex; align-items: center; flex: 1; margin: 0 15px 0 8px; }
.hscroll i { flex: 1; height: 6px; margin: 0 25px 0 3px; border-radius: 3px; background: #707070; }

/* status bar */
.status { display: flex; align-items: center; flex: none; height: 14px; padding: 0 6px 0 8px; background: #f2efea; font-size: 8px; }
.acc { gap: 2px; margin-left: 12px; font-weight: 700; color: #333; }
.views { display: flex; margin-left: auto; }
.views button { width: 27px; height: 14px; }
.views .on { background: #e6e4e1; }
.zoom { display: flex; align-items: center; gap: 4px; margin-left: 4px; font-size: 9px; }
.zoom span { margin-left: 2px; }
.zoom input { appearance: none; width: 66px; height: 1px; background: #999; }
.zoom input::-webkit-slider-thumb { appearance: none; width: 4px; height: 8px; background: #555; }
```

FILE: sheet.js
```js
const letters = 'ABCDEFGHIJKLMNOPQRS'.split('');
const widths = [19, 88, 87, 58, 47, 61, 65, 46, 46, 46, 46, 46, 47, 46, 46, 46, 47, 46, 46, 46];
const dotted = 'GHLPQ';
const filter = '<button aria-label="フィルター"><svg width="7" height="7" viewBox="0 0 7 7"><path d="M1.500 3h4l-2 2z" fill="#555"/></svg></button>';
const filtered = '<button aria-label="フィルター適用中"><svg width="9" height="9" viewBox="0 0 9 9"><path d="M2.500 2h6L6.500 4.500V8L5 7V4.500z" fill="#444"/><path d="M0 6h3L1.500 7.500z" fill="#444"/></svg></button>';
const fold = '<i class="fold"></i>';

const data = {
  1: { A: '年', B: '2025' + filtered },
  2: { A: '月 (日付)', B: '(すべて)' + filter },
  3: { A: '帳票区分', B: 'P/L' + filtered },
  5: { A: '合計 / 絶対金額', C: '貸借区分' + filter },
  6: { A: 'グループ' + filter, B: '勘定科目' + filter, C: '借方', D: '貸方', E: '借方集計' + filter, F: '貸方集計' + filter },
  7: { A: fold + '4_収益', B: '売上', D: 900000 },
  8: { B: 'メルマガ（売上）', D: 100000 },
  9: { B: '講演料（売上）', D: 200000 },
  10: { B: '受取利息', D: 100 },
  11: { A: '4_収益 集計', D: 1200100 },
  12: { A: fold + '5_費用', B: '支払手数料', C: 4900 },
  13: { B: '消耗品費', C: 500 },
  14: { B: '旅費交通費', C: 300 },
  15: { B: '飲食代', C: 3000 },
  16: { B: '取材費', C: 10000 },
  17: { B: '振込手数料', C: 500 },
  18: { B: '通信費', C: 1800 },
  19: { B: '支払家賃', C: 150000, D: 150000 },
  20: { B: '減価償却費', C: 10824 },
  21: { B: '仕入', C: 110000 },
  22: { B: '会議費', C: 5400 },
  23: { A: '5_費用 集計', C: 297224, D: 150000 },
  24: { A: '総計', C: 297224, D: 1350100 }
};

function cellClass(row, col) {
  const c = [];
  const pivot = 'ABCD'.includes(col);
  if ((row <= 3 && 'AB'.includes(col)) || ([5, 6, 24].includes(row) && pivot)) c.push('blue');
  if ([10, 11, 22].includes(row) && pivot) c.push('under');
  if (row === 3 && 'AB'.includes(col)) c.push('under');
  if (row === 6 && 'EF'.includes(col)) c.push('orange');
  if (row === 7 && 'EF'.includes(col)) c.push('peach');
  if (row === 4 && col === 'C') c.push('active');
  if ([7, 12].includes(row) && col === 'A') c.push('strongcell');
  if (dotted.includes(col)) c.push('dot');
  return c.join(' ');
}

let html = '<colgroup>' + widths.map(w => `<col style="width:${w}px">`).join('') + '</colgroup>';
html += '<thead><tr><th class="corner"></th>' + letters.map(l => `<th class="${l === 'C' ? 'sel-col' : ''}">${l}</th>`).join('') + '</tr></thead><tbody>';
for (let r = 1; r <= 27; r++) {
  const rowClass = [[5, 6, 11, 23, 24].includes(r) ? 'strong' : '', r >= 16 ? 'lined' : ''].join(' ');
  html += `<tr class="${rowClass}"><th class="${r === 4 ? 'sel-row' : ''}">${r <= 26 ? r : ''}</th>`;
  for (const l of letters) {
    const v = (data[r] || {})[l];
    const kind = typeof v === 'number' ? 'cell num' : r === 5 ? 'cell near' : 'cell';
    html += `<td class="${cellClass(r, l)}">${v === undefined ? '' : `<div class="${kind}">${v}</div>`}</td>`;
  }
  html += '</tr>';
}
document.getElementById('grid').innerHTML = html + '</tbody>';
```
